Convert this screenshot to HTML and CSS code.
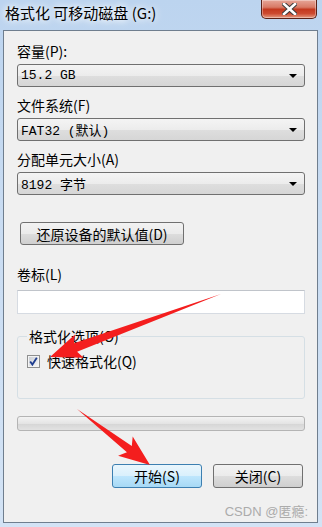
FILE: index.html
```html
<!DOCTYPE html>
<html lang="zh-CN">
<head>
    <meta charset="UTF-8">
    <title>格式化 可移动磁盘 (G:)</title>
    <link rel="stylesheet" href="styles.css">
</head>
<body>
<div class="window">
    <div class="titlebar">
        <span class="title">格式化 可移动磁盘 (G:)</span>
        <button class="close-btn" aria-label="关闭">
            <svg width="15" height="12" viewBox="0 0 15 12">
                <path d="M2 1 L13 11 M13 1 L2 11" stroke="#3b3b3b" stroke-width="4.6" stroke-linecap="square"/>
                <path d="M2 1 L13 11 M13 1 L2 11" stroke="#fff" stroke-width="2.6" stroke-linecap="square"/>
            </svg>
        </button>
    </div>

    <div class="client">
        <div class="label">容量(P):</div>
        <div class="combo"><span>15.2 GB</span><i class="caret"></i></div>

        <div class="label">文件系统(F)</div>
        <div class="combo"><span>FAT32 (默认)</span><i class="caret"></i></div>

        <div class="label">分配单元大小(A)</div>
        <div class="combo"><span>8192 字节</span><i class="caret"></i></div>

        <button class="btn btn-restore">还原设备的默认值(D)</button>

        <div class="label label-volume">卷标(L)</div>
        <input class="textbox" type="text">

        <fieldset class="options">
            <legend>格式化选项(O)</legend>
            <label class="check-row">
                <svg class="checkbox" width="13" height="13" viewBox="0 0 13 13">
                    <defs>
                        <linearGradient id="cbg" x1="0" y1="0" x2="1" y2="1">
                            <stop offset="0" stop-color="#cbcfd5"/>
                            <stop offset="1" stop-color="#f6f6f6"/>
                        </linearGradient>
                    </defs>
                    <rect x="0.5" y="0.5" width="12" height="12" fill="#f4f4f4" stroke="#8e8f8f"/>
                    <rect x="2" y="2" width="9" height="9" fill="url(#cbg)"/>
                    <path d="M3.2 6.4 L5.4 9.6 L9.8 2.8" fill="none" stroke="#1f3d8f" stroke-width="1.8"/>
                </svg>
                <span>快速格式化(Q)</span>
            </label>
        </fieldset>

        <div class="progress"></div>

        <div class="actions">
            <button class="btn btn-default">开始(S)</button>
            <button class="btn">关闭(C)</button>
        </div>

        <div class="watermark">CSDN @匿瘾:</div>
    </div>
</div>

<!-- red arrows drawn over the screenshot -->
<svg class="marks" width="322" height="527" viewBox="0 0 322 527">
    <polygon transform="translate(221 294) rotate(159.8)" fill="#f41e1e"
             points="0,0 155,-4.5 151,-12.5 182.2,0 151,12.5 155,4.5"/>
    <polygon transform="translate(77 409) rotate(37.5)" fill="#f41e1e"
             points="0,0 66,-4 61,-12 92,0 61,12 66,4"/>
</svg>
</body>
</html>
```

FILE: styles.css
```css
* { box-sizing: border-box; margin: 0; padding: 0; }

body {
    width: 322px;
    height: 527px;
    overflow: hidden;
    font-family: "Noto Sans CJK SC", "Liberation Sans", sans-serif;
    font-size: 14px;
    color: #000;
    position: relative;
}

/* window frame (aero glass) */
.window {
    width: 322px;
    height: 527px;
    background: linear-gradient(180deg, #bcd4ef 0%, #c9dcf2 40%, #d3e3f5 100%);
}

.titlebar {
    height: 30px;
    display: flex;
    justify-content: space-between;
    align-items: flex-start;
    padding: 0 5px 0 5px;
}
.title {
    margin-top: 4px;
    font-size: 15px;
    line-height: 18px;
    text-shadow: 0 0 6px #fff, 0 0 10px #fff;
}
.close-btn {
    width: 56px;
    height: 19px;
    display: flex;
    align-items: center;
    justify-content: center;
    border: 1px solid #5a2218;
    border-top: none;
    border-radius: 0 0 5px 5px;
    background: linear-gradient(180deg, #e6a698 0%, #d87a66 40%, #c3391f 52%, #cc4a30 75%, #e49a80 100%);
    box-shadow: inset 0 0 0 1px rgba(255,255,255,0.35);
}

/* dialog client area */
.client {
    margin: 0 4px 0 3px;
    height: 493px;
    border: 1px solid #6f7e8e;
    background: #f0f0f0;
    padding: 10px 12px 0 13px;
}

.label {
    line-height: 20px;
    margin-top: 8px;
}
.client > .label:first-child { margin-top: 0; }

.combo {
    height: 23px;
    margin-top: 3px;
    display: flex;
    align-items: center;
    justify-content: space-between;
    padding: 0 7px 0 3px;
    border: 1px solid #707070;
    border-radius: 3px;
    background: linear-gradient(180deg, #f4f4f4 0%, #ececec 50%, #dedede 51%, #d6d6d6 100%);
    font-family: "Liberation Mono", "Noto Sans CJK SC", monospace;
    font-size: 13px;
}
.caret {
    width: 0;
    height: 0;
    border-left: 4px solid transparent;
    border-right: 4px solid transparent;
    border-top: 4px solid #000;
}

.btn {
    height: 24px;
    width: 90px;
    border: 1px solid #707070;
    border-radius: 3px;
    background: linear-gradient(180deg, #f2f2f2 0%, #ebebeb 50%, #dddddd 51%, #cfcfcf 100%);
    font-family: inherit;
    font-size: 14px;
    color: #000;
    line-height: 20px;
}
.btn-restore {
    display: block;
    width: 164px;
    height: 23px;
    margin: 27px 0 0 3px;
}
.btn-default {
    border-color: #3c7fb1;
    background: linear-gradient(180deg, #eaf6fd 0%, #d9f0fc 50%, #bee6fd 51%, #a7d9f5 100%);
}

.label-volume { margin-top: 19px; }

.textbox {
    display: block;
    width: 100%;
    height: 24px;
    margin-top: 6px;
    border: 1px solid #d6dbe2;
    border-top-color: #c0c4ca;
    background: #fff;
}

.options {
    margin-top: 12px;
    padding: 5px 9px 27px;
    border: 1px solid #d5dfe5;
    border-radius: 3px;
}
.options legend {
    padding: 0 2px;
    line-height: 20px;
}
.check-row {
    display: flex;
    align-items: center;
    gap: 7px;
    line-height: 20px;
}
.checkbox { flex: none; }

.progress {
    height: 15px;
    margin-top: 17px;
    border: 1px solid #b4b4b4;
    border-radius: 3px;
    background: linear-gradient(180deg, #f3f3f3 0%, #e4e4e4 50%, #d6d6d6 55%, #e2e2e2 100%);
}

.actions {
    display: flex;
    justify-content: flex-end;
    gap: 11px;
    margin-top: 33px;
    padding-right: 2px;
}

.watermark {
    margin: 17px -3px 0 0;
    text-align: right;
    font-family: "Liberation Sans", "Noto Sans CJK SC", sans-serif;
    font-size: 13px;
    line-height: 14px;
    color: #ababab;
}

.marks {
    position: absolute;
    top: 0;
    left: 0;
    pointer-events: none;
}
```
